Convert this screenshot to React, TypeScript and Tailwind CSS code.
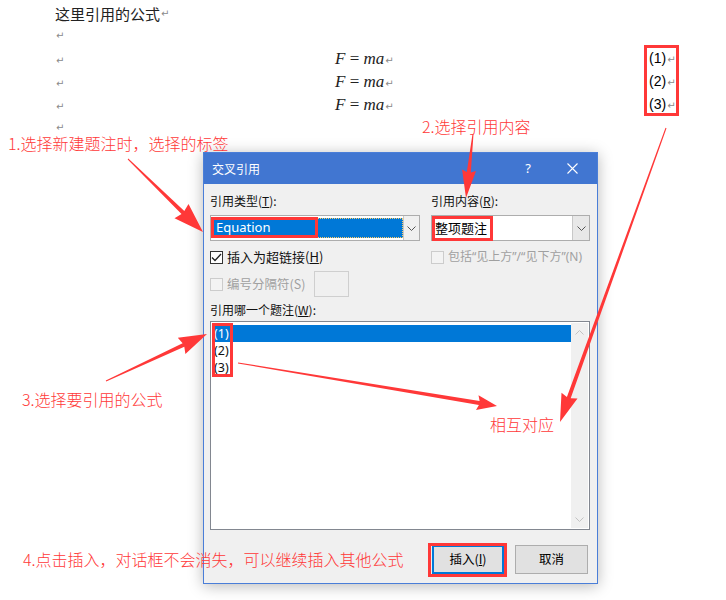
import React from "react";

const RED = "#ff3838";

// build a tapered arrow polygon from tail to tip
function arrowPoints(x1: number, y1: number, x2: number, y2: number, hl: number, hw: number, w0 = 1, w1 = 4) {
  const dx = x2 - x1;
  const dy = y2 - y1;
  const len = Math.hypot(dx, dy);
  const ux = dx / len;
  const uy = dy / len;
  const nx = -uy;
  const ny = ux;
  const bx = x2 - ux * hl;
  const by = y2 - uy * hl;
  const pts = [
    [x1 + (nx * w0) / 2, y1 + (ny * w0) / 2],
    [bx + (nx * w1) / 2, by + (ny * w1) / 2],
    [bx + (nx * hw) / 2 - ux * 2, by + (ny * hw) / 2 - uy * 2],
    [x2, y2],
    [bx - (nx * hw) / 2 - ux * 2, by - (ny * hw) / 2 - uy * 2],
    [bx - (nx * w1) / 2, by - (ny * w1) / 2],
    [x1 - (nx * w0) / 2, y1 - (ny * w0) / 2],
  ];
  return pts.map((p) => `${p[0].toFixed(1)},${p[1].toFixed(1)}`).join(" ");
}

const arrows = [
  { x1: 128, y1: 159, x2: 203, y2: 232, hl: 28, hw: 20 },
  { x1: 473, y1: 134, x2: 466, y2: 198, hl: 26, hw: 14 },
  { x1: 106, y1: 381, x2: 207, y2: 334, hl: 26, hw: 18 },
  { x1: 238, y1: 363, x2: 497, y2: 406, hl: 18, hw: 15 },
  { x1: 666, y1: 128, x2: 560, y2: 422, hl: 26, hw: 17 },
];

function Mark() {
  return <span className="ml-[1px] text-[10px] leading-[12px] text-[#8a8a8a]" style={{ fontFamily: "'DejaVu Sans', sans-serif" }}>↵</span>;
}

function Chevron({ color = "#555" }: { color?: string }) {
  return (
    <svg width="9" height="5" viewBox="0 0 9 5">
      <polyline points="0.5,0.5 4.5,4.5 8.5,0.5" fill="none" stroke={color} strokeWidth="1" />
    </svg>
  );
}

function Check({ checked, disabled }: { checked?: boolean; disabled?: boolean }) {
  return (
    <span
      className={`flex h-[13px] w-[13px] shrink-0 items-center justify-center border ${
        disabled ? "border-[#cccccc] bg-[#f3f3f3]" : "border-[#333] bg-white"
      }`}
    >
      {checked && (
        <svg width="11" height="9" viewBox="0 0 11 9">
          <polyline points="1,4.5 4,7.5 10,1" fill="none" stroke="#222" strokeWidth="1.3" />
        </svg>
      )}
    </span>
  );
}

function Box({ l, t, w, h }: { l: number; t: number; w: number; h: number }) {
  return (
    <div
      className="pointer-events-none absolute border-[3px] border-[#ff3838]"
      style={{ left: l, top: t, width: w, height: h }}
    />
  );
}

export default function App() {
  const cjk = "'Noto Sans CJK SC', sans-serif";
  const ui = "'Noto Sans', 'Noto Sans CJK SC', sans-serif";
  const eq = "'Liberation Serif', 'DejaVu Serif', serif";

  return (
    <div className="relative h-[600px] w-[726px] overflow-hidden bg-white">
      {/* document */}
      <div className="pl-[55px] pt-[3px] text-[15px] text-[#222]" style={{ fontFamily: cjk }}>
        <div className="flex h-[22px] items-center">
          这里引用的公式<Mark />
        </div>
        <div className="flex h-[22px] items-center"><Mark /></div>
        {["1", "2", "3"].map((n) => (
          <div key={n} className="flex h-[23px] items-center">
            <span className="w-[280px]"><Mark /></span>
            <span className="w-[314px] text-[17px]" style={{ fontFamily: eq }}>
              <i>F</i> = <i>ma</i>
              <Mark />
            </span>
            <span className="text-[14px] text-black" style={{ fontFamily: "'Liberation Sans', sans-serif" }}>
              ({n})<Mark />
            </span>
          </div>
        ))}
        <div className="flex h-[23px] items-center"><Mark /></div>
      </div>

      {/* dialog */}
      <div
        className="absolute left-[203px] top-[152px] h-[432px] w-[395px] border border-[#4a7ed8] bg-[#f0f0f0] text-[12px] text-[#111] shadow-[0_2px_14px_rgba(0,0,0,0.28)]"
        style={{ fontFamily: ui }}
      >
        <div className="flex h-[31px] items-center bg-[#4176d1] pl-[8px] text-white">
          <span className="flex-1" style={{ fontFamily: cjk }}>交叉引用</span>
          <span className="mr-[36px] text-[13px]">?</span>
          <svg width="11" height="11" viewBox="0 0 11 11" className="mr-[19px]">
            <path d="M0.5 0.5 L10.5 10.5 M10.5 0.5 L0.5 10.5" stroke="white" strokeWidth="1.1" />
          </svg>
        </div>

        <div className="px-[6px]" style={{ fontFamily: cjk }}>
          <div className="mt-[9px] flex gap-[11px] leading-[16px]">
            <div className="w-[210px]">
              引用类型(<span className="underline">T</span>):
            </div>
            <div className="w-[159px]">
              引用内容(<span className="underline">R</span>):
            </div>
          </div>

          <div className="mt-[6px] flex gap-[11px]">
            <div className="flex h-[26px] w-[210px] border border-[#adadad] bg-white p-[2px]">
              <div className="flex flex-1 items-center border border-dotted border-[#ffcc66] bg-[#0078d7] pl-[2px] text-[13px] text-white" style={{ fontFamily: ui }}>
                Equation
              </div>
              <div className="-my-[2px] -mr-[2px] flex w-[16px] items-center justify-center border-l border-[#c8c8c8] bg-[#f0f0f0]">
                <Chevron />
              </div>
            </div>
            <div className="flex h-[26px] w-[159px] border border-[#adadad] bg-white">
              <div className="flex flex-1 items-center pl-[3px] text-[13px] text-black">整项题注</div>
              <div className="flex w-[17px] items-center justify-center border-l border-[#c8c8c8] bg-[#e8e8e8]">
                <Chevron />
              </div>
            </div>
          </div>

          <div className="mt-[8px] flex gap-[11px] leading-[16px]">
            <div className="flex w-[210px] items-center gap-[4px]">
              <Check checked />
              <span className="text-[13px]">
                插入为超链接(<span className="underline">H</span>)
              </span>
            </div>
            <div className="flex w-[159px] items-center gap-[4px] whitespace-nowrap text-[#a0a0a0]">
              <Check disabled />
              <span className="text-[12px]" style={{ fontFamily: ui }}>包括“见上方”/“见下方”(N)</span>
            </div>
          </div>

          <div className="mt-[6px] flex items-center">
            <Check disabled />
            <span className="ml-[4px] w-[87px] text-[12.5px] text-[#a0a0a0]">编号分隔符(S)</span>
            <div className="h-[26px] w-[35px] border border-[#cfcfcf] bg-[#f0f0f0]" />
          </div>

          <div className="mt-[5px] leading-[16px]">
            引用哪一个题注(<span className="underline">W</span>):
          </div>

          <div className="mt-[3px] flex h-[209px] w-[380px] border border-[#828790] bg-white p-[1px]">
            <div className="flex-1 pt-[2px] text-[12.5px] leading-[17px]" style={{ fontFamily: ui }}>
              <div className="bg-[#0078d7] pl-[2px] text-white">(1)</div>
              <div className="pl-[2px]">(2)</div>
              <div className="pl-[2px]">(3)</div>
            </div>
            <div className="flex w-[17px] flex-col items-center justify-between bg-[#f0f0f0] pb-[6px] pt-[7px]">
              <span className="rotate-180"><Chevron color="#c2c2c2" /></span>
              <Chevron color="#c2c2c2" />
            </div>
          </div>

          <div className="mt-[15px] flex justify-end gap-[11px] pr-[3px]">
            <button className="flex h-[29px] w-[72px] items-center justify-center border-2 border-[#0078d7] bg-[#e1e1e1] text-[12.5px] text-black">
              插入(<span className="underline">I</span>)
            </button>
            <button className="flex h-[29px] w-[73px] items-center justify-center border border-[#adadad] bg-[#e1e1e1] text-[12.5px] text-black">
              取消
            </button>
          </div>
        </div>
      </div>

      {/* red highlight boxes */}
      <Box l={644} t={45} w={35} h={71} />
      <Box l={211} t={217} w={107} h={21} />
      <Box l={432} t={216} w={61} h={25} />
      <Box l={212} t={323} w={21} h={54} />
      <Box l={428} t={543} w={79} h={34} />

      {/* arrows */}
      <svg className="pointer-events-none absolute left-0 top-0" width="726" height="600">
        {arrows.map((a, i) => (
          <polygon key={i} points={arrowPoints(a.x1, a.y1, a.x2, a.y2, a.hl, a.hw)} fill={RED} />
        ))}
      </svg>

      {/* annotations */}
      <div className="font-light text-[16px] leading-[16px] text-[#ff3838]" style={{ fontFamily: cjk }}>
        <div className="absolute left-[8px] top-[135px] whitespace-nowrap">1.选择新建题注时，选择的标签</div>
        <div className="absolute left-[422px] top-[118px] whitespace-nowrap">2.选择引用内容</div>
        <div className="absolute left-[22px] top-[391px] whitespace-nowrap">3.选择要引用的公式</div>
        <div className="absolute left-[23px] top-[551px] whitespace-nowrap">4.点击插入，对话框不会消失，可以继续插入其他公式</div>
        <div className="absolute left-[490px] top-[416px] whitespace-nowrap">相互对应</div>
      </div>
    </div>
  );
}
